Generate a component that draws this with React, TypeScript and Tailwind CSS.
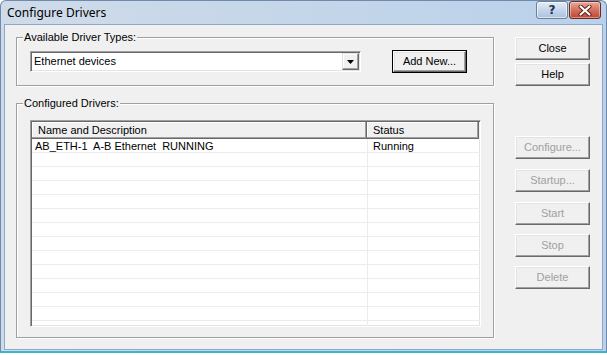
import type { ReactNode } from 'react';

const dlgFont = { fontFamily: '"Liberation Sans", Arial, sans-serif' };

function Btn({ children, disabled, isDefault, className = '' }: { children: ReactNode; disabled?: boolean; isDefault?: boolean; className?: string }) {
  const inner = (
    <div
      className={`flex h-full w-full items-center justify-center border border-t-white border-l-white border-r-[#696969] border-b-[#696969] bg-[#f0f0f0] shadow-[inset_-1px_-1px_0_#a0a0a0,inset_1px_1px_0_#e3e3e3] text-[11px] leading-[13px] ${disabled ? 'text-[#a0a0a0]' : 'text-black'}`}
    >
      {children}
    </div>
  );
  if (isDefault) {
    return <div className={`h-[23px] w-[75px] border border-black ${className}`}>{inner}</div>;
  }
  return <div className={`h-[23px] w-[75px] ${className}`}>{inner}</div>;
}

function Group({ label, children, className = '' }: { label: string; children: ReactNode; className?: string }) {
  return (
    <fieldset className={`w-[478px] border border-[#a0a0a0] shadow-[inset_1px_1px_0_#fff,1px_1px_0_#fff] ${className}`}>
      <legend className="ml-[6px] bg-[#f0f0f0] px-[1px] text-[11px] leading-[13px] text-black">{label}</legend>
      {children}
    </fieldset>
  );
}

const rows = Array.from({ length: 14 }, (_, i) => i);

export default function App() {
  return (
    <div className="h-[355px] w-[607px] overflow-hidden bg-white" style={dlgFont}>
      <div className="flex h-[353px] flex-col rounded-t-[6px] border-x border-t border-[#6f8aab] border-b-2 border-b-[#3cb4d4] bg-gradient-to-r from-[#cfdbe9] to-[#b9d1ea]">
        {/* title bar */}
        <div className="flex h-[23px] items-start justify-between">
          <span className="pl-[6px] pt-[4px] text-[12px] leading-[16px] text-black" style={{ fontFamily: '"Noto Sans", "Open Sans", sans-serif' }}>
            Configure Drivers
          </span>
          <div className="flex gap-[1px] pr-[5px]">
            <div className="flex h-[18px] w-[32px] items-center justify-center rounded-[3px] border border-[#6d7f99] bg-gradient-to-b from-[#e4edf7] via-[#c5d6ea] to-[#a9c1de] shadow-[inset_0_0_0_1px_rgba(255,255,255,0.6)]">
              <span className="text-[12px] font-bold leading-[12px] text-[#1e3250]" style={{ fontFamily: '"DejaVu Sans", sans-serif' }}>?</span>
            </div>
            <div className="flex h-[18px] w-[32px] items-center justify-center rounded-[3px] border border-[#6b2a22] bg-gradient-to-b from-[#e8a99c] via-[#d3705e] to-[#c0452f] shadow-[inset_0_0_0_1px_rgba(255,255,255,0.4)]">
              <svg width="14" height="11" viewBox="0 0 14 11">
                <path d="M2.5 1.5 L11.5 9.5 M11.5 1.5 L2.5 9.5" stroke="#5a1a12" strokeWidth="4" strokeLinecap="round" />
                <path d="M2.5 1.5 L11.5 9.5 M11.5 1.5 L2.5 9.5" stroke="#ffffff" strokeWidth="2.2" strokeLinecap="round" />
              </svg>
            </div>
          </div>
        </div>

        {/* client area */}
        <div className="mx-[3px] mb-[1px] flex flex-1 border border-[#8fa8c6] bg-[#f0f0f0]">
          <div className="flex flex-col pl-[11px] pt-[6px]">
            <Group label="Available Driver Types:">
              <div className="flex items-center pl-[13px] pt-[6px] pb-[12px]">
                {/* combobox */}
                <div className="flex h-[21px] w-[331px] border border-t-[#a0a0a0] border-l-[#a0a0a0] border-r-white border-b-white bg-white shadow-[inset_1px_1px_0_#696969,inset_-1px_-1px_0_#e3e3e3]">
                  <div className="flex flex-1 items-center pl-[3px] text-[11px] leading-[13px] text-black">Ethernet devices</div>
                  <div className="mt-[1px] mr-[1px] mb-[1px] flex w-[17px] items-center justify-center border border-t-[#e3e3e3] border-l-[#e3e3e3] border-r-[#696969] border-b-[#696969] bg-[#f0f0f0] shadow-[inset_-1px_-1px_0_#a0a0a0,inset_1px_1px_0_#fff]">
                    <svg width="7" height="4" viewBox="0 0 7 4">
                      <path d="M0 0 H7 L3.5 4 Z" fill="#000" />
                    </svg>
                  </div>
                </div>
                <Btn isDefault className="ml-[31px]">Add New...</Btn>
              </div>
            </Group>

            <Group label="Configured Drivers:" className="mt-[11px]">
              <div className="pl-[13px] pt-[10px] pb-[10px]">
                <div className="h-[207px] w-[451px] overflow-hidden border border-t-[#a0a0a0] border-l-[#a0a0a0] border-r-white border-b-white bg-white shadow-[inset_1px_1px_0_#696969,inset_-1px_-1px_0_#e3e3e3]">
                  <div className="ml-[1px] mt-[1px] flex h-[17px] bg-[#f0f0f0] text-[11px] leading-[13px] text-black">
                    <div className="flex w-[335px] items-center border-r border-b border-r-[#696969] border-b-[#696969] pl-[6px] shadow-[inset_-1px_-1px_0_#a0a0a0,inset_1px_1px_0_#fff]">
                      Name and Description
                    </div>
                    <div className="flex w-[112px] items-center border-r border-b border-r-[#696969] border-b-[#696969] pl-[6px] shadow-[inset_-1px_-1px_0_#a0a0a0,inset_1px_1px_0_#fff]">
                      Status
                    </div>
                  </div>
                  <div className="ml-[1px]">
                    {rows.map((i) => (
                      <div key={i} className="flex h-[14px] border-b border-[#ececec] text-[11px] leading-[13px] text-black">
                        <div className="w-[336px] whitespace-pre border-r border-[#ececec] pl-[3px] pt-[1px]">
                          {i === 0 ? 'AB_ETH-1  A-B Ethernet  RUNNING' : ''}
                        </div>
                        <div className="pl-[5px] pt-[1px]">{i === 0 ? 'Running' : ''}</div>
                      </div>
                    ))}
                  </div>
                </div>
              </div>
            </Group>
          </div>

          {/* right buttons */}
          <div className="ml-[21px] flex flex-col pt-[12px]">
            <Btn>Close</Btn>
            <Btn className="mt-[3px]">Help</Btn>
            <Btn disabled className="mt-[50px]">Configure...</Btn>
            <Btn disabled className="mt-[10px]">Startup...</Btn>
            <Btn disabled className="mt-[10px]">Start</Btn>
            <Btn disabled className="mt-[9px]">Stop</Btn>
            <Btn disabled className="mt-[9px]">Delete</Btn>
          </div>
        </div>
      </div>
    </div>
  );
}
